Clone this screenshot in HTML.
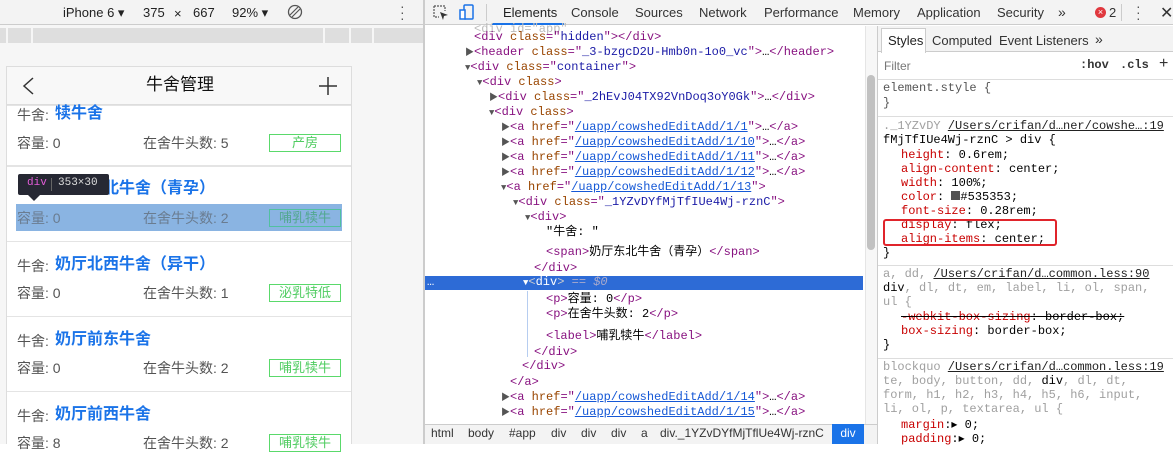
<!DOCTYPE html>
<html><head><meta charset="utf-8"><style>
*{margin:0;padding:0;box-sizing:border-box}
body{width:1173px;height:444px;overflow:hidden;position:relative;background:#fff;font-family:"Liberation Sans","Noto Sans CJK SC",sans-serif}
.a{position:absolute;white-space:nowrap}
.m{font-family:"Liberation Mono","Noto Sans CJK SC",monospace;font-size:12px;line-height:15px}
.tg{color:#881280}.at{color:#994500}.av{color:#1a1aa6}.lk{color:#1a1aa6;text-decoration:underline;color:#1558d6}
.gr{color:#a0a0a0}.pr{color:#c80000}
.tri{font-size:9px;color:#555}
.card{position:absolute;left:7px;width:344px;height:74px;background:#fff}
.t1{font-size:14px;color:#535353;line-height:18px}
.t2{font-size:16px;color:#1a73e8;font-weight:bold;line-height:18px}
.lab{position:absolute;left:269px;width:72px;height:18px;border:1px solid #5ad96b;color:#4fcc60;font-size:13px;text-align:center;line-height:16px}
</style></head><body>
<!-- left panel -->
<div class="a" style="left:0;top:0;width:423px;height:444px;background:#f6f6f6"></div>
<div class="a" style="left:0;top:0;width:423px;height:25px;background:#f3f3f3;border-bottom:1px solid #ccc"></div>
<div class="a" style="left:63px;top:5px;font-size:13px;color:#222">iPhone 6 ▾</div>
<div class="a" style="left:143px;top:5px;font-size:13px;color:#222">375</div>
<div class="a" style="left:174px;top:6px;font-size:13px;color:#222">×</div>
<div class="a" style="left:193px;top:5px;font-size:13px;color:#222">667</div>
<div class="a" style="left:232px;top:5px;font-size:13px;color:#222">92% ▾</div>
<svg class="a" style="left:287px;top:4px" width="16" height="16"><circle cx="8" cy="8" r="6.5" fill="none" stroke="#555" stroke-width="1.3"/><path d="M3 11L11 3M5 13L13 5" stroke="#555" stroke-width="1.2"/></svg>
<div class="a" style="left:400px;top:3px;font-size:14px;color:#555;line-height:6px">·<br>·<br>·</div>
<div class="a" style="left:0;top:28px;width:423px;height:15px;background:#dedede"></div>
<div class="a" style="left:6px;top:28px;width:2px;height:15px;background:#f6f6f6"></div>
<div class="a" style="left:31px;top:28px;width:2px;height:15px;background:#f6f6f6"></div>
<div class="a" style="left:323px;top:28px;width:2px;height:15px;background:#f6f6f6"></div>
<div class="a" style="left:349px;top:28px;width:2px;height:15px;background:#f6f6f6"></div>
<div class="a" style="left:372px;top:28px;width:2px;height:15px;background:#f6f6f6"></div>
<div class="a" style="left:6px;top:66px;width:346px;height:378px;background:#e4e4e4;border:1px solid #ddd"></div>
<div class="a" style="left:7px;top:67px;width:344px;height:38px;background:#f8f8f8;border-bottom:1px solid #ddd"></div>
<svg class="a" style="left:20px;top:76px" width="16" height="20"><path d="M13 2 L4 10 L13 18" fill="none" stroke="#333" stroke-width="1.5"/></svg>
<div class="a" style="left:146px;top:74px;font-size:17px;color:#111;line-height:22px">牛舍管理</div>
<svg class="a" style="left:318px;top:76px" width="20" height="20"><path d="M10 1V19M1 10H19" stroke="#333" stroke-width="1.5"/></svg>

<div class="card" style="top:106px;height:59px"></div>
<div class="a t1" style="left:17px;top:106px">牛舍:</div><div class="a t2" style="left:55px;top:105px">犊牛舍</div>
<div class="a t1" style="left:17px;top:134px">容量: 0</div><div class="a t1" style="left:143px;top:134px">在舍牛头数: 5</div>
<div class="lab" style="top:134px">产房</div>

<div class="card" style="top:167px"></div>
<div class="a t2" style="left:55px;top:180px">奶厅东北牛舍（青孕）</div>
<div class="a" style="left:16px;top:204px;width:326px;height:27px;background:#8ab4e2"></div>
<div class="a t1" style="left:17px;top:209px;color:#6a7c90">容量: 0</div><div class="a t1" style="left:143px;top:209px;color:#6a7c90">在舍牛头数: 2</div>
<div class="lab" style="top:209px;border-color:#52c0a0;color:#52a890">哺乳犊牛</div>
<div class="a" style="left:18px;top:174px;width:91px;height:21px;background:#262833;border-radius:2px"></div>
<div class="a" style="left:27px;top:177px;font-family:'Liberation Mono',monospace;font-size:11px;color:#e35cd8">div</div>
<div class="a" style="left:51px;top:178px;width:1px;height:13px;background:#666"></div>
<div class="a" style="left:58px;top:177px;font-family:'Liberation Mono',monospace;font-size:11px;color:#ddd">353×30</div>
<div class="a" style="left:28px;top:195px;border-left:6px solid transparent;border-right:6px solid transparent;border-top:6px solid #262833"></div>

<div class="card" style="top:242px"></div>
<div class="a t1" style="left:17px;top:257px">牛舍:</div><div class="a t2" style="left:55px;top:256px">奶厅北西牛舍（异干）</div>
<div class="a t1" style="left:17px;top:284px">容量: 0</div><div class="a t1" style="left:143px;top:284px">在舍牛头数: 1</div>
<div class="lab" style="top:284px">泌乳特低</div>

<div class="card" style="top:317px"></div>
<div class="a t1" style="left:17px;top:332px">牛舍:</div><div class="a t2" style="left:55px;top:331px">奶厅前东牛舍</div>
<div class="a t1" style="left:17px;top:359px">容量: 0</div><div class="a t1" style="left:143px;top:359px">在舍牛头数: 2</div>
<div class="lab" style="top:359px">哺乳犊牛</div>

<div class="card" style="top:392px;height:52px"></div>
<div class="a t1" style="left:17px;top:407px">牛舍:</div><div class="a t2" style="left:55px;top:406px">奶厅前西牛舍</div>
<div class="a t1" style="left:17px;top:434px">容量: 8</div><div class="a t1" style="left:143px;top:434px">在舍牛头数: 2</div>
<div class="lab" style="top:434px">哺乳犊牛</div>

<div class="a" style="left:423px;top:0;width:2px;height:444px;background:#ccc"></div>

<!-- devtools top bar -->
<div class="a" style="left:425px;top:0;width:748px;height:25px;background:#f3f3f3;border-bottom:1px solid #ccc"></div>
<svg class="a" style="left:433px;top:5px" width="16" height="16"><path d="M1 1H12V6M1 1V12H6" fill="none" stroke="#555" stroke-width="1.2" stroke-dasharray="2 1"/><path d="M7 7L15 10L11 11L10 15Z" fill="#333"/></svg>
<svg class="a" style="left:459px;top:4px" width="16" height="16"><rect x="5" y="1" width="9" height="14" rx="1" fill="none" stroke="#1a73e8" stroke-width="1.5"/><rect x="1" y="6" width="5" height="9" fill="#fff" stroke="#1a73e8" stroke-width="1.5"/></svg>
<div class="a" style="left:486px;top:4px;width:1px;height:17px;background:#ccc"></div>
<div class="a" style="left:503px;top:5px;font-size:13px;color:#222">Elements</div>
<div class="a" style="left:492px;top:23px;width:72px;height:2px;background:#1a73e8"></div>
<div class="a" style="left:571px;top:5px;font-size:13px;color:#333">Console</div>
<div class="a" style="left:635px;top:5px;font-size:13px;color:#333">Sources</div>
<div class="a" style="left:699px;top:5px;font-size:13px;color:#333">Network</div>
<div class="a" style="left:764px;top:5px;font-size:13px;color:#333">Performance</div>
<div class="a" style="left:853px;top:5px;font-size:13px;color:#333">Memory</div>
<div class="a" style="left:917px;top:5px;font-size:13px;color:#333">Application</div>
<div class="a" style="left:997px;top:5px;font-size:13px;color:#333">Security</div>
<div class="a" style="left:1058px;top:4px;font-size:14px;color:#333">»</div>
<div class="a" style="left:1095px;top:7px;width:11px;height:11px;border-radius:50%;background:#e0383e;color:#fff;font-size:9px;text-align:center;line-height:11px">×</div>
<div class="a" style="left:1109px;top:5px;font-size:13px;color:#333">2</div>
<div class="a" style="left:1121px;top:4px;width:1px;height:17px;background:#ccc"></div>
<div class="a" style="left:1136px;top:3px;font-size:14px;color:#555;line-height:6px">·<br>·<br>·</div>
<div class="a" style="left:1160px;top:3px;font-size:16px;color:#333">✕</div>

<!-- DOM tree -->
<div class="a m" style="left:474px;top:22px;color:#bbb">&lt;div id="app"</div>
<div class="a m" style="left:474px;top:30px"><span class="tg">&lt;div </span><span class="at">class</span><span class="tg">="</span><span class="av">hidden</span><span class="tg">"&gt;&lt;/div&gt;</span></div>
<div class="a m" style="left:465px;top:45px"><span class="tri">▶</span><span class="tg">&lt;header </span><span class="at">class</span><span class="tg">="</span><span class="av">_3-bzgcD2U-Hmb0n-1o0_vc</span><span class="tg">"&gt;</span>…<span class="tg">&lt;/header&gt;</span></div>
<div class="a m" style="left:465px;top:60px"><span class="tri">▼</span><span class="tg">&lt;div </span><span class="at">class</span><span class="tg">="</span><span class="av">container</span><span class="tg">"&gt;</span></div>
<div class="a m" style="left:477px;top:75px"><span class="tri">▼</span><span class="tg">&lt;div </span><span class="at">class</span><span class="tg">&gt;</span></div>
<div class="a m" style="left:489px;top:90px"><span class="tri">▶</span><span class="tg">&lt;div </span><span class="at">class</span><span class="tg">="</span><span class="av">_2hEvJ04TX92VnDoq3oY0Gk</span><span class="tg">"&gt;</span>…<span class="tg">&lt;/div&gt;</span></div>
<div class="a m" style="left:489px;top:105px"><span class="tri">▼</span><span class="tg">&lt;div </span><span class="at">class</span><span class="tg">&gt;</span></div>
<div class="a m" style="left:501px;top:120px"><span class="tri">▶</span><span class="tg">&lt;a </span><span class="at">href</span><span class="tg">="</span><span class="lk">/uapp/cowshedEditAdd/1/1</span><span class="tg">"&gt;</span>…<span class="tg">&lt;/a&gt;</span></div>
<div class="a m" style="left:501px;top:135px"><span class="tri">▶</span><span class="tg">&lt;a </span><span class="at">href</span><span class="tg">="</span><span class="lk">/uapp/cowshedEditAdd/1/10</span><span class="tg">"&gt;</span>…<span class="tg">&lt;/a&gt;</span></div>
<div class="a m" style="left:501px;top:150px"><span class="tri">▶</span><span class="tg">&lt;a </span><span class="at">href</span><span class="tg">="</span><span class="lk">/uapp/cowshedEditAdd/1/11</span><span class="tg">"&gt;</span>…<span class="tg">&lt;/a&gt;</span></div>
<div class="a m" style="left:501px;top:165px"><span class="tri">▶</span><span class="tg">&lt;a </span><span class="at">href</span><span class="tg">="</span><span class="lk">/uapp/cowshedEditAdd/1/12</span><span class="tg">"&gt;</span>…<span class="tg">&lt;/a&gt;</span></div>
<div class="a m" style="left:501px;top:180px"><span class="tri">▼</span><span class="tg">&lt;a </span><span class="at">href</span><span class="tg">="</span><span class="lk">/uapp/cowshedEditAdd/1/13</span><span class="tg">"&gt;</span></div>
<div class="a m" style="left:513px;top:195px"><span class="tri">▼</span><span class="tg">&lt;div </span><span class="at">class</span><span class="tg">="</span><span class="av">_1YZvDYfMjTfIUe4Wj-rznC</span><span class="tg">"&gt;</span></div>
<div class="a m" style="left:525px;top:210px"><span class="tri">▼</span><span class="tg">&lt;div&gt;</span></div>
<div class="a m" style="left:546px;top:225px">"牛舍: "</div>
<div class="a m" style="left:546px;top:245px"><span class="tg">&lt;span&gt;</span>奶厅东北牛舍（青孕）<span class="tg">&lt;/span&gt;</span></div>
<div class="a m" style="left:534px;top:261px"><span class="tg">&lt;/div&gt;</span></div>
<div class="a" style="left:425px;top:276px;width:438px;height:14px;background:#2d6bd6"></div>
<div class="a m" style="left:427px;top:275px;color:#fff">…</div>
<div class="a m" style="left:523px;top:275px;color:#fff"><span style="font-size:9px">▼</span><span style="color:#ccc">&lt;</span>div<span style="color:#ccc">&gt;</span> <span style="color:#aac">== <i>$0</i></span></div>
<div class="a" style="left:527px;top:291px;width:1px;height:66px;background:#b6cdf0"></div>
<div class="a m" style="left:546px;top:292px"><span class="tg">&lt;p&gt;</span>容量: 0<span class="tg">&lt;/p&gt;</span></div>
<div class="a m" style="left:546px;top:307px"><span class="tg">&lt;p&gt;</span>在舍牛头数: 2<span class="tg">&lt;/p&gt;</span></div>
<div class="a m" style="left:546px;top:329px"><span class="tg">&lt;label&gt;</span>哺乳犊牛<span class="tg">&lt;/label&gt;</span></div>
<div class="a m" style="left:534px;top:345px"><span class="tg">&lt;/div&gt;</span></div>
<div class="a m" style="left:522px;top:359px"><span class="tg">&lt;/div&gt;</span></div>
<div class="a m" style="left:510px;top:375px"><span class="tg">&lt;/a&gt;</span></div>
<div class="a m" style="left:501px;top:390px"><span class="tri">▶</span><span class="tg">&lt;a </span><span class="at">href</span><span class="tg">="</span><span class="lk">/uapp/cowshedEditAdd/1/14</span><span class="tg">"&gt;</span>…<span class="tg">&lt;/a&gt;</span></div>
<div class="a m" style="left:501px;top:405px"><span class="tri">▶</span><span class="tg">&lt;a </span><span class="at">href</span><span class="tg">="</span><span class="lk">/uapp/cowshedEditAdd/1/15</span><span class="tg">"&gt;</span>…<span class="tg">&lt;/a&gt;</span></div>
<div class="a" style="left:865px;top:26px;width:12px;height:399px;background:#f7f7f7;border-left:1px solid #e5e5e5"></div>
<div class="a" style="left:867px;top:75px;width:8px;height:175px;background:#c1c1c1;border-radius:4px"></div>
<!-- breadcrumb -->
<div class="a" style="left:425px;top:424px;width:452px;height:20px;background:#f3f3f3;border-top:1px solid #ccc"></div>
<div class="a" style="left:431px;top:426px;font-size:12px;color:#333">html</div>
<div class="a" style="left:468px;top:426px;font-size:12px;color:#333">body</div>
<div class="a" style="left:509px;top:426px;font-size:12px;color:#333">#app</div>
<div class="a" style="left:551px;top:426px;font-size:12px;color:#333">div</div>
<div class="a" style="left:581px;top:426px;font-size:12px;color:#333">div</div>
<div class="a" style="left:611px;top:426px;font-size:12px;color:#333">div</div>
<div class="a" style="left:641px;top:426px;font-size:12px;color:#333">a</div>
<div class="a" style="left:660px;top:426px;font-size:12px;color:#333">div._1YZvDYfMjTflUe4Wj-rznC</div>
<div class="a" style="left:832px;top:424px;width:32px;height:20px;background:#1a73e8;color:#fff;font-size:12px;text-align:center;line-height:19px">div</div>

<!-- styles -->
<div class="a" style="left:877px;top:26px;width:1px;height:418px;background:#ccc"></div>
<div class="a" style="left:878px;top:26px;width:295px;height:26px;background:#f3f3f3;border-bottom:1px solid #ccc"></div>
<div class="a" style="left:881px;top:28px;width:45px;height:25px;background:#fff;border:1px solid #ccc;border-bottom:none"></div>
<div class="a" style="left:888px;top:33px;font-size:13px;color:#222">Styles</div>
<div class="a" style="left:932px;top:33px;font-size:13px;color:#333">Computed</div>
<div class="a" style="left:999px;top:33px;font-size:13px;color:#333">Event Listeners</div>
<div class="a" style="left:1095px;top:31px;font-size:14px;color:#333">»</div>
<div class="a" style="left:878px;top:79px;width:295px;height:1px;background:#ddd"></div>
<div class="a" style="left:884px;top:59px;font-size:12px;color:#777">Filter</div>
<div class="a m" style="left:1080px;top:58px;font-weight:bold;color:#333">:hov</div>
<div class="a m" style="left:1120px;top:58px;font-weight:bold;color:#333">.cls</div>
<div class="a" style="left:1159px;top:55px;font-size:16px;color:#333">+</div>
<div class="a m" style="left:883px;top:81px;color:#555">element.style {<br>}</div>
<div class="a" style="left:878px;top:116px;width:295px;height:1px;background:#ddd"></div>
<div class="a m" style="left:883px;top:119px;line-height:14px"><span class="gr">._1YZvDY</span> <span style="text-decoration:underline;color:#222">/Users/crifan/d…ner/cowshe…:19</span><br>fMjTfIUe4Wj-rznC &gt; div {</div>
<div class="a m" style="left:901px;top:148px;line-height:14px"><span class="pr">height</span>: 0.6rem;<br><span class="pr">align-content</span>: center;<br><span class="pr">width</span>: 100%;<br><span class="pr">color</span>: <span style="display:inline-block;width:9px;height:9px;background:#535353"></span>#535353;<br><span class="pr">font-size</span>: 0.28rem;<br><span class="pr">display</span>: flex;<br><span class="pr">align-items</span>: center;</div>
<div class="a" style="left:883px;top:219px;width:174px;height:27px;border:2px solid #e0242b;border-radius:3px"></div>
<div class="a m" style="left:883px;top:246px">}</div>
<div class="a" style="left:878px;top:265px;width:295px;height:1px;background:#ddd"></div>
<div class="a m" style="left:883px;top:267px;line-height:14px"><span class="gr">a, dd,</span>   <span style="text-decoration:underline;color:#222">/Users/crifan/d…common.less:90</span><br>div<span class="gr">, dl, dt, em, label, li, ol, span,</span><br><span class="gr">ul {</span></div>
<div class="a m" style="left:901px;top:310px;line-height:14px"><span style="text-decoration:line-through"><span class="pr">-webkit-box-sizing</span>: border-box;</span><br><span class="pr">box-sizing</span>: border-box;</div>
<div class="a m" style="left:883px;top:338px">}</div>
<div class="a" style="left:878px;top:358px;width:295px;height:1px;background:#ddd"></div>
<div class="a m" style="left:883px;top:360px;line-height:14px"><span class="gr">blockquo</span> <span style="text-decoration:underline;color:#222">/Users/crifan/d…common.less:19</span><br><span class="gr">te, body, button, dd, </span>div<span class="gr">, dl, dt,</span><br><span class="gr">form, h1, h2, h3, h4, h5, h6, input,</span><br><span class="gr">li, ol, p, textarea, ul {</span></div>
<div class="a m" style="left:901px;top:418px;line-height:14px"><span class="pr">margin</span>:▸ 0;<br><span class="pr">padding</span>:▸ 0;</div>
</body></html>
